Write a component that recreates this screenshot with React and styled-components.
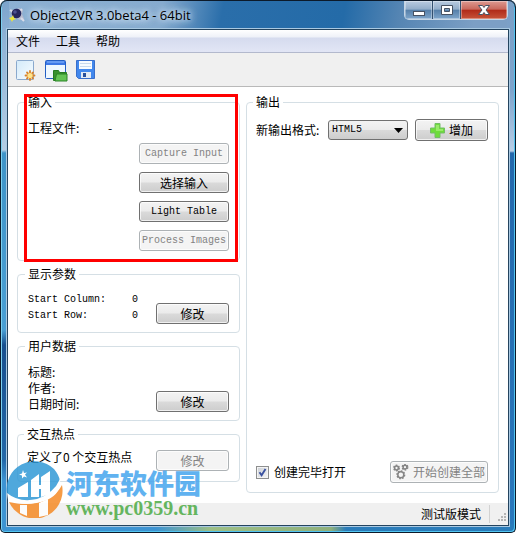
import React from 'react';
import styled, { createGlobalStyle } from 'styled-components';

const sans = '"Noto Sans CJK SC", "Noto Sans", sans-serif';
const mono = '"Liberation Mono", "Noto Sans CJK SC", monospace';

const GlobalStyle = createGlobalStyle`
  *, *::before, *::after { box-sizing: border-box; }
  body { margin: 0; background: #fff; font: 12px/16px ${sans}; color: #000; }
  button, input, select { font: inherit; margin: 0; }
`;

const Window = styled.div`
  position: relative;
  display: flex;
  flex-direction: column;
  min-height: 100vh;
  padding: 1px 7px 7px;
  border: 1px solid #0c1a2a;
  border-top: 0;
  border-radius: 7px 7px 5px 5px;
  box-shadow: inset 0 1px #0c1a2a, inset 1px 0 #7cd0f0, inset -1px -1px #52c4f0;
  background:
    linear-gradient(90deg, #3d93d2 0, #3d93d2 155px, #9dbf86 210px, #8fb07c 330px, #2a7cba 345px, #2a7cba) bottom / 100% 8px no-repeat,
    linear-gradient(#7ba3cb 0, #8fb3d6 40px, #b4cde4 150px, #3f94c8 153px, #4a9fd4 330px, #184f8e 345px, #2368a8 460px, #3d93d2 480px) left / 8px 100% no-repeat,
    linear-gradient(#7b9fc6 0, #7ea4cc 90px, #b8cee6 151px, #2468ac 153px, #2a78bc) right / 8px 100% no-repeat,
    linear-gradient(100deg, #8db1d3 0, #86abcf 160px, #2a6eaa 220px, #246ba8 340px, #5585b3 395px, #7c9fc5 470px);
`;

const TitleBar = styled.header`
  display: flex;
  justify-content: space-between;
  height: 29px;
`;

const Title = styled.h1`
  display: flex;
  align-items: center;
  gap: 5px;
  margin: 0;
  padding: 0 8px 0 1px;
  height: 28px;
  font: 13px/16px "Open Sans", sans-serif;
  text-shadow: 0 0 8px #d5e5f4, 0 0 8px #d5e5f4, 0 0 5px #c5dbef;
`;

const WindowControls = styled.div`
  display: flex;
  height: 19px;
  border: 1px solid #c5d6e6;
  border-top: 0;
  border-radius: 0 0 5px 5px;
  overflow: hidden;
`;

const steel = 'linear-gradient(#b9cbe0 0, #92adc9 46%, #557fa9 50%, #7fa6cb)';
const red = 'linear-gradient(#dd9a91 0, #c9685c 46%, #b02a18 50%, #c7543a)';

const ControlButton = styled.button`
  display: grid;
  place-items: center;
  width: ${p => (p.$close ? 46 : 28)}px;
  padding: 0;
  border: 0;
  border-right: ${p => (p.$close ? '0' : '1px solid #33506f')};
  background: ${p => (p.$close ? red : steel)};
  box-shadow: inset 0 0 0 1px rgba(255,255,255,.35);
`;

const Client = styled.div`
  flex: 1;
  display: flex;
  flex-direction: column;
  background: #fff;
  box-shadow: 0 0 0 1px #24445f, 0 0 0 2px #a9c9e2;
`;

const MenuBar = styled.nav`
  display: flex;
  gap: 16px;
  height: 23px;
  padding: 0 8px;
  background: linear-gradient(#fff 0, #eef1f8 7px, #d5dbee 8px, #e1e5f5 21px);
  border-bottom: 1px solid #b3b9cd;
`;

const MenuItem = styled.button`
  padding: 0;
  border: 0;
  background: none;
  line-height: 20px;
`;

const ToolBar = styled.div`
  display: flex;
  align-items: center;
  gap: 6px;
  height: 34px;
  padding: 0 6px;
  background: #f0f0f0;
  border-bottom: 1px solid #b9b9b9;
`;

const ToolButton = styled.button`
  display: grid;
  place-items: center;
  width: 24px;
  height: 24px;
  padding: 0;
  border: 0;
  background: none;
`;

const Content = styled.main`
  flex: 1;
  display: grid;
  grid-template-columns: 223px minmax(0, 1fr);
  gap: 6px;
  padding: 7px 9px 10px;
`;

const Column = styled.div`
  position: relative;
  display: flex;
  flex-direction: column;
  gap: 5px;
`;

const Group = styled.fieldset`
  display: flex;
  flex-direction: column;
  flex: ${p => (p.$fill ? 1 : 'none')};
  min-width: 0;
  margin: 0;
  padding: ${p => p.$pad || '10px 10px 8px'};
  border: 1px solid #d5dfe5;
  border-radius: 4px;
`;

const Legend = styled.legend`
  height: 16px;
  padding: 0 3px;
  margin-left: -3px;
`;

const Highlight = styled.div`
  position: absolute;
  inset: 0 2px auto 7px;
  height: 168px;
  border: 3px solid #f00;
  pointer-events: none;
`;

const Facts = styled.dl`
  display: grid;
  grid-template-columns: ${p => p.$label}px auto;
  margin: 0;
  font-family: ${p => (p.$mono ? mono : sans)};
  font-size: ${p => (p.$mono ? 10 : 12)}px;
  dt, dd { margin: 0; height: 16px; line-height: 16px; white-space: nowrap; }
`;

const ButtonStack = styled.div`
  display: flex;
  flex-direction: column;
  align-items: flex-end;
  gap: 8px;
  margin-top: 7px;
`;

const PushButton = styled.button`
  display: flex;
  align-items: center;
  justify-content: center;
  gap: 4px;
  flex: none;
  width: ${p => p.$width || 73}px;
  height: ${p => (p.$tall ? 22 : 21)}px;
  padding: 0;
  border: 1px solid #707070;
  border-radius: 3px;
  background: linear-gradient(#f3f3f3 0, #ebebeb 48%, #dadada 52%, #cdcdcd);
  box-shadow: inset 0 0 0 1px rgba(255,255,255,.7);
  color: #000;
  font-family: ${p => (p.$mono ? mono : sans)};
  font-size: ${p => (p.$mono ? 10 : 12)}px;
  line-height: 16px;
  white-space: nowrap;
  &:disabled { border-color: #adb2b5; background: #f4f4f4; color: #838383; }
`;

const Row = styled.div`
  display: flex;
  align-items: ${p => p.$align || 'flex-end'};
  justify-content: space-between;
  min-height: 22px;
  margin-top: ${p => (p.$bottom ? 'auto' : 0)};
`;

const Note = styled.p`
  align-self: flex-start;
  margin: 0;
  white-space: nowrap;
`;

const SelectBox = styled.span`
  display: grid;
  align-items: center;
  width: 80px;
  margin: 0 7px 0 auto;
  > * { grid-area: 1 / 1; }
  > svg { justify-self: end; margin-right: 5px; pointer-events: none; }
`;

const Select = styled.select`
  appearance: none;
  width: 100%;
  height: 20px;
  padding: 0 3px;
  border: 1px solid #707070;
  border-radius: 3px;
  background: linear-gradient(#f3f3f3 0, #ebebeb 48%, #dadada 52%, #cdcdcd);
  color: #000;
  && { font: 10px/16px ${mono}; }
`;

const CheckLabel = styled.label`
  display: flex;
  align-items: center;
  gap: 5px;
`;

const Check = styled.input`
  appearance: none;
  width: 13px;
  height: 13px;
  border: 1px solid #8e8f8f;
  background: linear-gradient(135deg, #cbcfd5, #f6f6f6);
  box-shadow: inset 0 0 0 1px #f4f4f4;
  &:checked {
    background: url("data:image/svg+xml,%3Csvg xmlns='http://www.w3.org/2000/svg' viewBox='0 0 11 11'%3E%3Cpath d='M2.5 5.2L4.6 8.2L8.5 2' fill='none' stroke='%233b52a0' stroke-width='1.9'/%3E%3C/svg%3E") center / 11px no-repeat, linear-gradient(135deg, #cbcfd5, #f6f6f6);
  }
`;

const StatusBar = styled.footer`
  display: flex;
  align-items: center;
  justify-content: flex-end;
  gap: 8px;
  height: 22px;
  padding-right: 1px;
  background: #f0f0f0;
`;

const Divider = styled.span`
  width: 1px;
  height: 18px;
  background: #d2d2d2;
`;

const Watermark = styled.div`
  position: absolute;
  left: 5px;
  bottom: 14px;
  display: flex;
  align-items: flex-end;
  gap: 3px;
  opacity: .85;
  pointer-events: none;
`;

const SiteName = styled.div`
  color: #45a5ee;
  font: 900 27px/30px ${sans};
`;

const SiteUrl = styled.div`
  color: #4cab45;
  font: bold 20px/20px "Liberation Serif", serif;
`;

const AppIcon = () => (
  <svg width="16" height="16" viewBox="0 0 16 16">
    <path d="M2 2l3 2 5-3 4 2-1 4 2 5-4 1-4-2-4 1z" fill="#b9bdd0" />
    <path d="M1 3l3 2M12 11l3 3M13 2l-3 3" stroke="#d8dce9" strokeWidth="2" />
    <circle cx="7.5" cy="6.5" r="4.8" fill="#25265c" />
    <circle cx="6" cy="5" r="1.8" fill="#4c5090" />
    <path d="M0 11l3-1 1-2 1 3 2 1-3 1-1 2-1-2z" fill="#eee637" />
  </svg>
);

const NewIcon = () => (
  <svg width="22" height="24" viewBox="0 0 22 24">
    <defs>
      <linearGradient id="paper" x1="0" y1="0" x2="1" y2="1">
        <stop stopColor="#d3eafa" />
        <stop offset="1" stopColor="#f7fcff" />
      </linearGradient>
    </defs>
    <rect x="1.5" y="2.5" width="17" height="19" rx="1" fill="url(#paper)" stroke="#8aa9cd" />
    <g stroke="#d9842c" strokeWidth="1.8" strokeLinecap="round">
      <path d="M15 13v9M10.5 17.5h9M12 14.5l6 6M18 14.5l-6 6" />
    </g>
    <circle cx="15" cy="17.5" r="2.6" fill="#ffe58a" />
  </svg>
);

const OpenIcon = () => (
  <svg width="24" height="24" viewBox="0 0 24 24">
    <rect x="1.5" y="2.5" width="20" height="18" rx="1" fill="#eef7ff" stroke="#245fc4" />
    <path d="M2 3h19v4H2z" fill="#3d78e6" />
    <path d="M3 4h17" stroke="#8fbdff" />
    <path d="M9.5 12.5h5l1 2h7v8h-13z" fill="#38912f" stroke="#247b22" />
    <path d="M12.5 16H23v7H11z" fill="#63c354" stroke="#2b8427" />
  </svg>
);

const SaveIcon = () => (
  <svg width="22" height="24" viewBox="0 0 22 24">
    <path d="M1.5 2.5h18v18h-16l-2-2z" fill="#4288ed" stroke="#3a6fcb" />
    <path d="M4 3h13v8H4z" fill="#f7fbff" />
    <path d="M5 5.5h11M5 8.5h11" stroke="#c7d9ee" />
    <path d="M6 14h10v6H6z" fill="#e5ebf4" />
    <path d="M8 15h3v4H8z" fill="#29509b" />
  </svg>
);

const PlusIcon = () => (
  <svg width="15" height="15" viewBox="0 0 15 15">
    <path d="M5 .5h5V5h4.5v5H10v4.5H5V10H.5V5H5z" fill="#6edc3b" stroke="#72bd66" />
    <path d="M6 2h3v4h4v2H6z" fill="#98ea6a" />
  </svg>
);

const gears = [[3.5, 4, 1.9], [12, 3.2, 1.9], [7.8, 10.8, 3]];
const GearsIcon = () => (
  <svg width="16" height="16" viewBox="0 0 16 16" fill="none" stroke="#858585">
    {gears.map(([x, y, r]) => (
      <g key={x}>
        <circle cx={x} cy={y} r={r + 0.8} strokeWidth="1.5" strokeDasharray="1.6 1.3" />
        <circle cx={x} cy={y} r={r} strokeWidth="1.5" />
      </g>
    ))}
  </svg>
);

const SiteLogo = () => (
  <svg width="57" height="57" viewBox="0 0 57 57">
    <path d="M1 33A28 28 0 0 1 48 8Q53 14 54 20Q48 33 31 39Q14 43 1 33z" fill="#3199d6" />
    <path d="M3 41Q24 46 42 38Q52 32 56 24A28 28 0 0 1 3 41z" fill="#f58a26" />
    <path d="M12 27l10-6v15H12zM25 19l8-6v11h2V16l9-6v23l-9 3V28h-2v8h-8z" fill="#fff" />
    <path d="M1 32Q13 42 31 38Q48 32 54 18Q56 32 41 39Q19 47 2 39z" fill="#fff" />
    <path d="M14 44h7v11l-7-3zM33 42l9-4v16l-9 2z" fill="#fff" />
    <path d="M17 9l1 3 3-.5-2 2 2 3-3-1-2 2v-3l-3-1 3-1z" fill="#fff" />
  </svg>
);

const Grip = () => (
  <svg width="9" height="18" viewBox="0 0 9 18" fill="#b5b5b5">
    <path d="M6 8h2v2H6zM3 11h2v2H3zM6 11h2v2H6zM0 14h2v2H0zM3 14h2v2H3zM6 14h2v2H6z" />
  </svg>
);

const glyph = { fill: '#fff', stroke: '#475263' };

export default function App() {
  return (
    <>
      <GlobalStyle />
      <Window>
        <TitleBar>
          <Title><AppIcon />Object2VR 3.0beta4 - 64bit</Title>
          <WindowControls>
            <ControlButton aria-label="最小化">
              <svg width="14" height="14"><rect x="1.5" y="8.5" width="11" height="4" {...glyph} /></svg>
            </ControlButton>
            <ControlButton aria-label="最大化">
              <svg width="14" height="14"><path d="M1.5 2.5h11v9h-11zM4.5 5.5v3h5v-3z" fillRule="evenodd" {...glyph} /></svg>
            </ControlButton>
            <ControlButton $close aria-label="关闭">
              <svg width="14" height="14"><path d="M1.5 2.5h4L7 4.5l1.5-2h4L9 7l3.5 4.5h-4L7 9.5l-1.5 2h-4L5 7z" {...glyph} /></svg>
            </ControlButton>
          </WindowControls>
        </TitleBar>
        <Client>
          <MenuBar>
            <MenuItem>文件</MenuItem>
            <MenuItem>工具</MenuItem>
            <MenuItem>帮助</MenuItem>
          </MenuBar>
          <ToolBar>
            <ToolButton aria-label="新建"><NewIcon /></ToolButton>
            <ToolButton aria-label="打开"><OpenIcon /></ToolButton>
            <ToolButton aria-label="保存"><SaveIcon /></ToolButton>
          </ToolBar>
          <Content>
            <Column>
              <Group $pad="10px 10px 9px">
                <Legend>输入</Legend>
                <Facts $label={80}><dt>工程文件:</dt><dd>-</dd></Facts>
                <ButtonStack>
                  <PushButton $width={90} $mono disabled>Capture Input</PushButton>
                  <PushButton $width={90}>选择输入</PushButton>
                  <PushButton $width={90} $mono>Light Table</PushButton>
                  <PushButton $width={90} $mono disabled>Process Images</PushButton>
                </ButtonStack>
              </Group>
              <Group>
                <Legend>显示参数</Legend>
                <Row>
                  <Facts $label={104} $mono>
                    <dt>Start Column:</dt><dd>0</dd>
                    <dt>Start Row:</dt><dd>0</dd>
                  </Facts>
                  <PushButton>修改</PushButton>
                </Row>
              </Group>
              <Group>
                <Legend>用户数据</Legend>
                <Row>
                  <Facts $label={80}>
                    <dt>标题:</dt><dd />
                    <dt>作者:</dt><dd />
                    <dt>日期时间:</dt><dd />
                  </Facts>
                  <PushButton>修改</PushButton>
                </Row>
              </Group>
              <Group $pad="7px 10px 10px 9px">
                <Legend>交互热点</Legend>
                <Row>
                  <Note>定义了0 个交互热点</Note>
                  <PushButton disabled>修改</PushButton>
                </Row>
              </Group>
              <Highlight />
            </Column>
            <Column>
              <Group $fill $pad="9px 10px 9px 9px">
                <Legend>输出</Legend>
                <Row $align="center">
                  <label htmlFor="format">新输出格式:</label>
                  <SelectBox>
                    <Select id="format"><option>HTML5</option></Select>
                    <svg width="9" height="5"><path d="M0 0h9L4.5 5z" /></svg>
                  </SelectBox>
                  <PushButton $tall><PlusIcon />增加</PushButton>
                </Row>
                <Row $align="center" $bottom>
                  <CheckLabel><Check type="checkbox" defaultChecked />创建完毕打开</CheckLabel>
                  <PushButton $tall $width={98} disabled><GearsIcon />开始创建全部</PushButton>
                </Row>
              </Group>
            </Column>
          </Content>
          <StatusBar>
            <span>测试版模式</span>
            <Divider />
            <Grip />
          </StatusBar>
        </Client>
        <Watermark>
          <SiteLogo />
          <div>
            <SiteName>河东软件园</SiteName>
            <SiteUrl>www.pc0359.cn</SiteUrl>
          </div>
        </Watermark>
      </Window>
    </>
  );
}
